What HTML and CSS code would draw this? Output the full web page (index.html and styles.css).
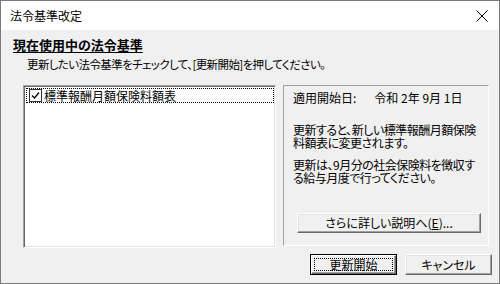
FILE: index.html
```html
<!DOCTYPE html>
<html lang="ja">
<head>
<meta charset="utf-8">
<title>法令基準改定</title>
<link rel="stylesheet" href="styles.css">
</head>
<body>
<div class="win">
  <div class="titlebar">
    <span class="title">法令基準改定</span>
    <svg class="close" width="12" height="12" viewBox="0 0 12 12"><path d="M0.5 0.5 L11.5 11.5 M11.5 0.5 L0.5 11.5" stroke="#000" stroke-width="1" fill="none"/></svg>
  </div>
  <div class="body">
    <h1 class="heading">現在使用中の法令基準</h1>
    <p class="sub">更新したい法令基準をチェックして、[更新開始]を押してください。</p>
    <div class="main">
      <div class="list">
        <div class="item">
          <svg class="check" width="13" height="13" viewBox="0 0 13 13"><rect x="0.5" y="0.5" width="12" height="12" fill="#fff" stroke="#333"/><path d="M3 6.5 L5.5 9 L10 3.5" stroke="#000" stroke-width="1.3" fill="none"/></svg>
          <span>標準報酬月額保険料額表</span>
        </div>
      </div>
      <div class="panel">
        <p class="date">適用開始日:<span class="dval">令和 2年 9月 1日</span></p>
        <p class="para p1">更新すると、新しい標準報酬月額保険<br>料額表に変更されます。</p>
        <p class="para p2">更新は、9月分の社会保険料を徴収す<br>る給与月度で行ってください。</p>
        <button class="btn more">さらに詳しい説明へ(<u>E</u>)...</button>
      </div>
    </div>
    <div class="actions">
      <button class="btn default"><span class="focus">更新開始</span></button>
      <button class="btn">キャンセル</button>
    </div>
  </div>
</div>
</body>
</html>
```
FILE: styles.css
```css
* { box-sizing: border-box; }
html, body { margin: 0; padding: 0; }
body {
  font-family: "Noto Sans CJK JP", "Noto Sans", sans-serif;
  font-size: 12px;
  color: #000;
  background: #fff;
}
.win {
  width: 500px;
  height: 284px;
  border: 1px solid #7a7a7a;
  background: #f0f0f0;
  display: flex;
  flex-direction: column;
}
.titlebar {
  height: 29px;
  background: #fff;
  display: flex;
  align-items: center;
  justify-content: space-between;
  padding: 0 11px 0 9px;
}
.title { font-size: 12px; line-height: 16px; }
.close { display: block; }
.body {
  flex: 1;
  display: flex;
  flex-direction: column;
}
.heading {
  margin: 7px 0 0 12px;
  font-size: 13px;
  line-height: 16px;
  font-weight: bold;
  text-decoration: underline;
  text-underline-offset: 2px;
  font-feature-settings: "palt";
}
.sub {
  margin: 3px 0 0 26px;
  font-size: 11.5px;
  letter-spacing: -0.6px;
  line-height: 16px;
  font-feature-settings: "palt";
}
.main {
  display: flex;
  gap: 7px;
  margin: 13px 0 0 22px;
  align-items: flex-start;
}
.list {
  width: 253px;
  height: 163px;
  background: #fff;
  border: 1px solid;
  border-color: #a0a0a0 #fff #fff #a0a0a0;
  box-shadow: inset 1px 1px #696969, inset -1px -1px #e3e3e3;
  padding: 2px 1px 0 2px;
}
.item {
  height: 15px;
  border: 1px dotted #000;
  display: flex;
  align-items: center;
  gap: 2px;
  padding-left: 2px;
  font-size: 12px;
  line-height: 13px;
}
.check { display: block; flex: none; }
.panel {
  width: 206px;
  height: 161px;
  border: 1px solid;
  border-color: #a0a0a0 #fff #fff #a0a0a0;
  display: flex;
  flex-direction: column;
  padding: 5px 7px 12px 9px;
}
.panel p {
  margin: 0;
  font-size: 12px;
  line-height: 13px;
  white-space: nowrap;
  font-feature-settings: "palt";
}
.para { letter-spacing: -0.5px; }
.dval { margin-left: 18px; }
.p1 { margin-top: 19px !important; }
.p2 { margin-top: 9px !important; }
.btn {
  font-family: inherit;
  font-size: 12px;
  line-height: 14px;
  color: #000;
  background: #f0f0f0;
  border: 1px solid;
  border-color: #fff #696969 #696969 #fff;
  box-shadow: inset -1px -1px #a0a0a0, inset 1px 1px #e3e3e3;
  padding: 0;
  font-feature-settings: "palt";
}
.more {
  margin-top: auto;
  margin-left: 4px;
  width: 184px;
  height: 20px;
}
.more u { text-underline-offset: 1px; }
.actions {
  display: flex;
  justify-content: flex-end;
  gap: 8px;
  margin: 6px 7px 0 0;
}
.actions .btn {
  width: 87px;
  height: 21px;
}
.default {
  border: 1px solid #000;
  box-shadow: inset 1px 1px #fff, inset -1px -1px #696969, inset -2px -2px #a0a0a0;
  padding: 3px;
  display: flex;
}
.focus {
  flex: 1;
  border: 1px dotted #000;
  display: flex;
  align-items: center;
  justify-content: center;
  line-height: 12px;
}
```
